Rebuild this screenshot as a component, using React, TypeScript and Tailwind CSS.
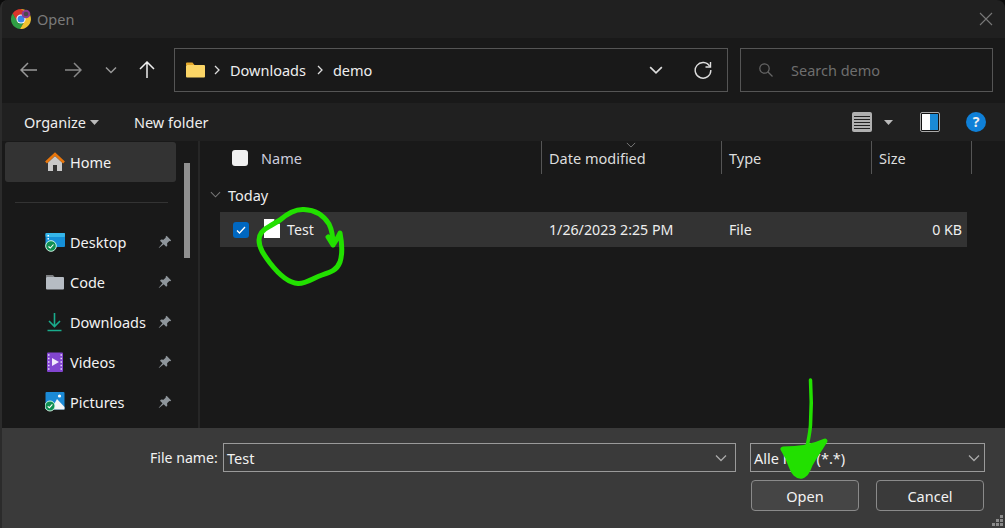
import React from "react";

const Chevron = ({ c = "#ccc", w = 12, sw = 1.3 }: { c?: string; w?: number; sw?: number }) => (
  <svg width={w} height={w} viewBox="0 0 12 12" fill="none" stroke={c} strokeWidth={sw}>
    <path d="M1 3.5l5 5 5-5" />
  </svg>
);
const Gt = () => (
  <svg width="6" height="10" viewBox="0 0 6 10" fill="none" stroke="#ddd" strokeWidth="1.3">
    <path d="M1 1l4 4-4 4" />
  </svg>
);
const Caret = ({ c = "#bbb" }: { c?: string }) => (
  <svg width="9" height="5" viewBox="0 0 9 5"><path d="M0 0h9L4.5 5z" fill={c} /></svg>
);
const Pin = () => (
  <svg width="14" height="14" viewBox="0 0 14 14" fill="#8e959b">
    <path d="M8.6.8l4.6 4.6-1 .9-.8-.3-2.3 2.3.2 2.4-1.1 1.1-2.5-2.5L1 13l-.3-.3 3.8-4.5L2 5.7l1.1-1.1 2.4.2 2.3-2.3-.2-.8z" />
  </svg>
);
const Home = () => (
  <svg width="20" height="20" viewBox="0 0 20 20">
    <path d="M3 10.5V19h5v-6h4v6h5v-8.500L10 4z" fill="#c9c9c9" />
    <path d="M1 10.500L10 2l9 8.500" fill="none" stroke="#e8760c" strokeWidth="2.600" />
  </svg>
);
const Desktop = () => (
  <svg width="20" height="20" viewBox="0 0 20 20">
    <rect x="0.500" y="1" width="19.500" height="14" rx="1" fill="#1590d8" />
    <rect x="0.500" y="1" width="19.500" height="4" rx="1" fill="#35b6ea" />
    <rect x="2.500" y="3" width="1.500" height="1.500" fill="#fff" />
    <rect x="2.500" y="6" width="1.500" height="1.500" fill="#fff" />
    <circle cx="6" cy="14" r="5.300" fill="#0f8f52" stroke="#dfe" strokeWidth="0.900" />
    <path d="M3.500 14.500l1.800 1.500 3.200-3.500" fill="none" stroke="#fff" strokeWidth="1.100" />
  </svg>
);
const GreyFolder = () => (
  <svg width="20" height="20" viewBox="0 0 20 20">
    <path d="M1 3h7l2 2.500H1z" fill="#7d7f82" />
    <rect x="1" y="5" width="18" height="12.500" rx="1" fill="#b6bcc3" />
  </svg>
);
const DownloadIcon = () => (
  <svg width="20" height="20" viewBox="0 0 20 20" fill="none" stroke="#19ac8c" strokeWidth="1.600">
    <path d="M9.500 1v13M4 9l5.500 5.500L15 9M2.500 18.500h14" />
  </svg>
);
const VideoIcon = () => (
  <svg width="20" height="20" viewBox="0 0 20 20">
    <rect x="2" y="0.500" width="16" height="19.500" rx="1" fill="#8245d0" />
    <path d="M7 6l7 4-7 4z" fill="#f0e8fb" />
    <path d="M3 3h1.500M3 6.500h1.500M3 10h1.500M3 13.500h1.500M3 17h1.500M15.500 3H17M15.500 6.500H17M15.500 10H17M15.500 13.500H17M15.500 17H17" stroke="#e5d8f7" strokeWidth="1.300" />
  </svg>
);
const PictureIcon = () => (
  <svg width="20" height="20" viewBox="0 0 20 20">
    <rect x="0.500" y="0" width="19" height="17.500" rx="1" fill="#1b8ad6" />
    <path d="M6 17.500L12 7l7.500 8v2.500z" fill="#f4f6f8" />
    <circle cx="14.500" cy="4" r="1.600" fill="#fff" />
    <circle cx="5" cy="14" r="5" fill="#0f8f52" stroke="#dfe" strokeWidth="0.900" />
    <path d="M2.700 14.300l1.700 1.400 3-3.300" fill="none" stroke="#fff" strokeWidth="1.100" />
  </svg>
);

const places: [string, React.ReactNode][] = [
  ["Desktop", <Desktop />],
  ["Code", <GreyFolder />],
  ["Downloads", <DownloadIcon />],
  ["Videos", <VideoIcon />],
  ["Pictures", <PictureIcon />],
];

export default function App() {
  return (
    <div className="relative w-[1005px] h-[528px] overflow-hidden bg-[#0c0c0c] text-white text-[14.5px] font-['Noto_Sans','Open_Sans',sans-serif] leading-5">
      <div className="flex flex-col h-full rounded-t-lg overflow-hidden border-l-2 border-[#2b2b2b] bg-[#202020]">
        {/* Title bar */}
        <div className="h-[38px] flex items-center pl-[9px] pr-[12px] shrink-0">
          <svg width="20" height="20" viewBox="0 0 20 20">
            <path d="M10 0a10 10 0 0 1 9.300 6.500H10z" fill="#e9b92d" />
            <path d="M10 0a10 10 0 0 0-8.400 4.600L5 11l3-5h10z" fill="#d9352b" />
            <path d="M1.600 4.600A10 10 0 0 0 9 20l3.500-6-5 .3z" fill="#2f9e44" />
            <path d="M9 20A10 10 0 0 0 19.300 6.500H13l1 5z" fill="#f0c22f" />
            <circle cx="10" cy="10" r="4.600" fill="#fff" />
            <circle cx="10" cy="10" r="3.500" fill="#3b82e8" />
            <circle cx="15" cy="5" r="4.300" fill="#8e3a94" />
            <circle cx="15" cy="5" r="2.300" fill="#4a4a4a" />
          </svg>
          <span className="ml-[6px] text-[#7a7a7a]">Open</span>
          <svg className="ml-auto" width="14" height="14" viewBox="0 0 14 14" stroke="#777" strokeWidth="1.100" fill="none">
            <path d="M1 1l12 12M13 1L1 13" />
          </svg>
        </div>

        {/* Navigation row */}
        <div className="h-[65px] shrink-0 bg-[#191919] flex items-center pb-px text-[#eee]">
          <svg className="ml-[18px]" width="18" height="18" viewBox="0 0 18 18" fill="none" stroke="#999" strokeWidth="1.500">
            <path d="M17 9H1M8 2L1 9l7 7" />
          </svg>
          <svg className="ml-[26px]" width="18" height="18" viewBox="0 0 18 18" fill="none" stroke="#888" strokeWidth="1.500">
            <path d="M1 9h16M10 2l7 7-7 7" />
          </svg>
          <div className="ml-[23px]"><Chevron c="#999" sw={1.500} /></div>
          <svg className="ml-[21px]" width="18" height="18" viewBox="0 0 18 18" fill="none" stroke="#eee" strokeWidth="1.500">
            <path d="M9 17V1M2 8l7-7 7 7" />
          </svg>
          <div className="ml-[18px] w-[554px] h-[44px] border border-[#555] flex items-center pl-[11px] pr-[15px]">
            <svg width="19" height="16" viewBox="0 0 19 16">
              <path d="M0 1.500A1 1 0 0 1 1 .5h5.500l2 2.500H0z" fill="#e5a92c" />
              <rect x="0" y="3" width="19" height="12.500" rx="1" fill="#fbd566" />
            </svg>
            <div className="ml-[9px]"><Gt /></div>
            <span className="ml-[10px] -mt-[1px]">Downloads</span>
            <div className="ml-[11px]"><Gt /></div>
            <span className="ml-[10px] -mt-[1px]">demo</span>
            <div className="ml-auto"><Chevron c="#ddd" w={14} sw={1.400} /></div>
            <svg className="ml-[31px]" width="18" height="18" viewBox="0 0 18 18" fill="none" stroke="#ddd" strokeWidth="1.400">
              <path d="M15.800 5.500A7.800 7.800 0 1 0 16.800 9" />
              <path d="M16.500 1v5h-5" />
            </svg>
          </div>
          <div className="ml-[12px] w-[253px] h-[44px] border border-[#555] flex items-center pl-[18px]">
            <svg width="14" height="14" viewBox="0 0 14 14" fill="none" stroke="#666" strokeWidth="1.200">
              <circle cx="5.500" cy="5.500" r="4.700" /><path d="M9 9l4.500 4.500" />
            </svg>
            <span className="ml-[18px] text-[#6e6e6e]">Search demo</span>
          </div>
        </div>

        {/* Command bar */}
        <div className="h-[38px] shrink-0 flex items-center pl-[22px] text-[#eee]">
          <span>Organize</span>
          <div className="ml-[4px]"><Caret /></div>
          <span className="ml-[35px]">New folder</span>
          <div className="ml-auto flex items-center mr-[19px]">
            <div className="w-[20px] h-[20px] rounded-[2px] bg-[#b0b0b0] flex flex-col justify-center gap-[2px] px-[2px]">
              <div className="h-px bg-[#222]" /><div className="h-px bg-[#222]" /><div className="h-px bg-[#222]" /><div className="h-px bg-[#222]" /><div className="h-px bg-[#222]" />
            </div>
            <div className="ml-[12px]"><Caret /></div>
            <div className="ml-[27px] w-[20px] h-[20px] rounded-[2px] border border-[#aaa] bg-[#111] p-[1px] flex">
              <div className="flex-1 bg-white" /><div className="flex-1 bg-[#1a8ad6]" />
            </div>
            <div className="ml-[26px] w-[20px] h-[20px] rounded-full bg-[#0f80d8] flex items-center justify-center text-[14px] font-bold">?</div>
          </div>
        </div>

        {/* Main */}
        <div className="h-[287px] shrink-0 flex bg-[#191919]">
          {/* Sidebar */}
          <div className="w-[198px] shrink-0 flex border-r-2 border-[#262626]">
            <div className="w-[174px] shrink-0">
              <div className="ml-[3px] mt-px h-[40px] bg-[#333] rounded-[3px] flex items-center pl-[40px] gap-[5px] text-[#f2f2f2]">
                <Home /><span>Home</span>
              </div>
              <div className="ml-[13px] mr-[8px] mt-[20px] h-px bg-[#333]" />
              <div className="mt-[19px]">
                {places.map(([name, icon]) => (
                  <div key={name} className="h-[40px] flex items-center pl-[43px] pr-[4px] gap-[5px] text-[#f2f2f2]">
                    <div className="w-[20px] flex justify-center">{icon}</div>
                    <span>{name}</span>
                    <div className="ml-auto"><Pin /></div>
                  </div>
                ))}
              </div>
            </div>
            <div className="ml-[8px] mt-[22px] w-[6px] h-[95px] bg-[#909090]" />
          </div>

          {/* File list */}
          <div className="flex-1 min-w-0 pl-[20px]">
            <div className="relative h-[33px] grid grid-cols-[322px_180px_150px_100px] text-[#ddd]">
              <div className="flex items-center border-r border-[#555] pl-[12px]">
                <div className="w-[16px] h-[16px] rounded-[3px] bg-[#f0f0f0]" />
                <span className="ml-[13px] text-[#ccd]">Name</span>
              </div>
              <div className="relative flex items-center border-r border-[#555] pl-[7px]">
                <span className="mt-[1px]">Date modified</span>
                <div className="absolute top-[-1px] left-[84px]"><Chevron c="#888" w={10} sw={1} /></div>
              </div>
              <div className="flex items-center border-r border-[#555] pl-[7px]">Type</div>
              <div className="flex items-center border-r border-[#555] pl-[7px]">Size</div>
            </div>
            <div className="h-[38px] flex items-center pt-[3px] text-[#eee]">
              <div className="ml-[-10px] mr-[7px]"><Chevron c="#777" w={11} sw={1.100} /></div>
              <span>Today</span>
            </div>
            <div className="h-[35px] w-[747px] bg-[#333] grid grid-cols-[321px_180px_150px_91px] items-center pt-px text-[14.2px] text-[#eee]">
              <div className="flex items-center pl-[13px]">
                <div className="w-[16px] h-[16px] rounded-[3px] bg-[#0067c0] flex items-center justify-center">
                  <svg width="10" height="10" viewBox="0 0 10 10" fill="none" stroke="#fff" strokeWidth="1.300"><path d="M1 5.500l2.500 2.500L9 2" /></svg>
                </div>
                <svg className="ml-[15px] -mt-[3px]" width="16" height="19" viewBox="0 0 16 19">
                  <path d="M0 0h10l6 5v14H0z" fill="#fff" />
                  <path d="M10 0l6 5h-6z" fill="#555" />
                </svg>
                <span className="ml-[7px]">Test</span>
              </div>
              <span className="pl-[8px]">1/26/2023 2:25 PM</span>
              <span className="pl-[8px]">File</span>
              <span className="text-right">0 KB</span>
            </div>
          </div>
        </div>

        {/* Footer */}
        <div className="flex-1 bg-[#3a3a3a] pt-[15px] relative text-[#f2f2f2]">
          <div className="flex items-center h-[29px]">
            <span className="ml-[148px] w-[67px] whitespace-nowrap text-[14.1px]">File name:</span>
            <div className="ml-[6px] w-[513px] h-[29px] border border-[#9a9a9a] flex items-center pl-[3px] pr-[8px]">
              <span>Test</span>
              <div className="ml-auto"><Chevron c="#aaa" /></div>
            </div>
            <div className="ml-[14px] w-[235px] h-[29px] border border-[#9a9a9a] flex items-center pl-[3px] pr-[4px]">
              <span>Alle Files (*.*)</span>
              <div className="ml-auto"><Chevron c="#aaa" /></div>
            </div>
          </div>
          <div className="flex mt-[8px] ml-[749px] gap-[17px]">
            <button className="w-[108px] h-[31px] rounded-[4px] border border-[#8a8a8a] bg-[#454545] text-[#f2f2f2]">Open</button>
            <button className="w-[108px] h-[31px] rounded-[4px] border border-[#8a8a8a] text-[#f2f2f2]">Cancel</button>
          </div>
          <svg className="absolute right-[1px] bottom-[1px]" width="12" height="12" viewBox="0 0 12 12" fill="#8a8a8a">
            <path d="M8 0h3v3H8zM4 4h3v3H4zM8 4h3v3H8zM0 8h3v3H0zM4 8h3v3H4zM8 8h3v3H8z" />
          </svg>
        </div>
      </div>

      {/* Green hand-drawn annotations on top of the screenshot */}
      <svg className="absolute inset-0 pointer-events-none" width="1005" height="528" viewBox="0 0 1005 528" fill="none" stroke="#22e000" strokeLinecap="round" strokeLinejoin="round">
        <path strokeWidth="5" d="M280 220C288 213 296 209 304 209.500C316 210 324 216 329 224C332 230 333 237 333 245L328 237M333 245C336 241 338 237 340 233C342 243 342.500 254 340 262C337 270 331 272 322 275C313 278 306 284 298 283.500C288 283 277 272 270 263C264 255 259 248 259 240C259 233 264 229 270 226L280 220" />
        <path strokeWidth="3.500" d="M810.500 380C811.500 395 811.500 410 810.500 425C810 433 808 441 807 447" />
        <path strokeWidth="5" fill="#22e000" d="M783 449C795 449 812 447 825 441C820 449 814 457 810 465C808 470 806 475 802 476C797 477 793 472 791 466C789 460 787 455 783 449Z" />
      </svg>
    </div>
  );
}
